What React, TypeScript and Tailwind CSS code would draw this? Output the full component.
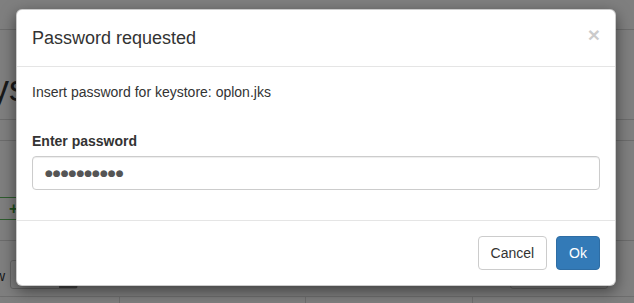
export default function App() {
  return (
    <div className="relative w-[634px] h-[303px] overflow-hidden bg-white font-['Liberation_Sans',Arial,sans-serif] text-[#333] text-[14px]">
      {/* underlying page */}
      <div className="flex flex-col">
        <div className="h-[30px] border-b border-[#d8d8d8]" />
        <div className="h-[89px] flex items-end pb-[12px]">
          <h1 className="-ml-[53px] text-[36px] leading-[36px] text-[#333]">Keystores</h1>
        </div>
        <div className="h-[22px] border-y border-[#d8d8d8]" />
        <div className="h-[56px]" />
        <div className="h-[23px] w-[60px] -ml-[10px] border border-[#5cb85c] rounded-[3px] flex items-center pl-[18px] text-[#3c9a3c] font-bold text-[16px] leading-none">
          +
        </div>
        <div className="h-[20px]" />
        <div className="h-[20px] border-t border-[#d8d8d8]" />
        <div className="flex items-start h-[36px]">
          <span className="-ml-[30px] mt-[6px] text-[14px]">Show</span>
          <div className="ml-[5px] w-[68px] h-[29px] border border-[#ccc] rounded-[3px] flex items-end justify-end">
            <div className="w-[18px] h-[4px] bg-[#888]" />
          </div>
          <div className="ml-auto mr-[26px] w-[98px] h-[29px] border border-[#ccc] rounded-[3px]" />
        </div>
        <div className="flex border-t border-[#ddd] h-[20px]">
          <div className="w-[120px] border-r border-[#ddd]" />
          <div className="w-[186px] border-r border-[#ddd]" />
          <div className="w-[167px] border-r border-[#ddd]" />
        </div>
      </div>

      {/* backdrop */}
      <div className="absolute inset-0 bg-black/50" />

      {/* modal */}
      <div className="absolute left-[16px] top-[9px] w-[600px] bg-white rounded-[6px] border border-black/20 shadow-[0_5px_15px_rgba(0,0,0,0.5)] flex flex-col">
        <div className="flex items-start justify-between px-[15px] pt-[15px] pb-[15px] border-b border-[#e5e5e5]">
          <h4 className="text-[18px] leading-[26px] text-[#333]">Password requested</h4>
          <button className="text-[21px] leading-[21px] font-bold text-black opacity-20 -mt-[1px] [text-shadow:0_1px_0_#fff]">
            ×
          </button>
        </div>
        <div className="px-[15px] pt-[15px] pb-[15px]">
          <p className="leading-[20px]">Insert password for keystore: oplon.jks</p>
          <div className="mt-[29px]">
            <label className="block font-bold leading-[20px] mb-[5px]">Enter password</label>
            <div className="w-full h-[34px] px-[12px] border border-[#ccc] rounded-[4px] shadow-[inset_0_1px_1px_rgba(0,0,0,0.075)] flex items-center">
              <span className="font-['DejaVu_Sans',sans-serif] text-[9px] tracking-[0px] leading-none text-[#555]">●●●●●●●●●●</span>
            </div>
          </div>
          <div className="h-[15px]" />
        </div>
        <div className="flex justify-end gap-[9px] px-[15px] py-[15px] border-t border-[#e5e5e5]">
          <button className="h-[34px] px-[12px] border border-[#ccc] rounded-[4px] bg-white text-[#333] text-[14px] leading-[20px]">
            Cancel
          </button>
          <button className="h-[34px] px-[12px] border border-[#2e6da4] rounded-[4px] bg-[#337ab7] text-white text-[14px] leading-[20px]">
            Ok
          </button>
        </div>
      </div>
    </div>
  );
}
